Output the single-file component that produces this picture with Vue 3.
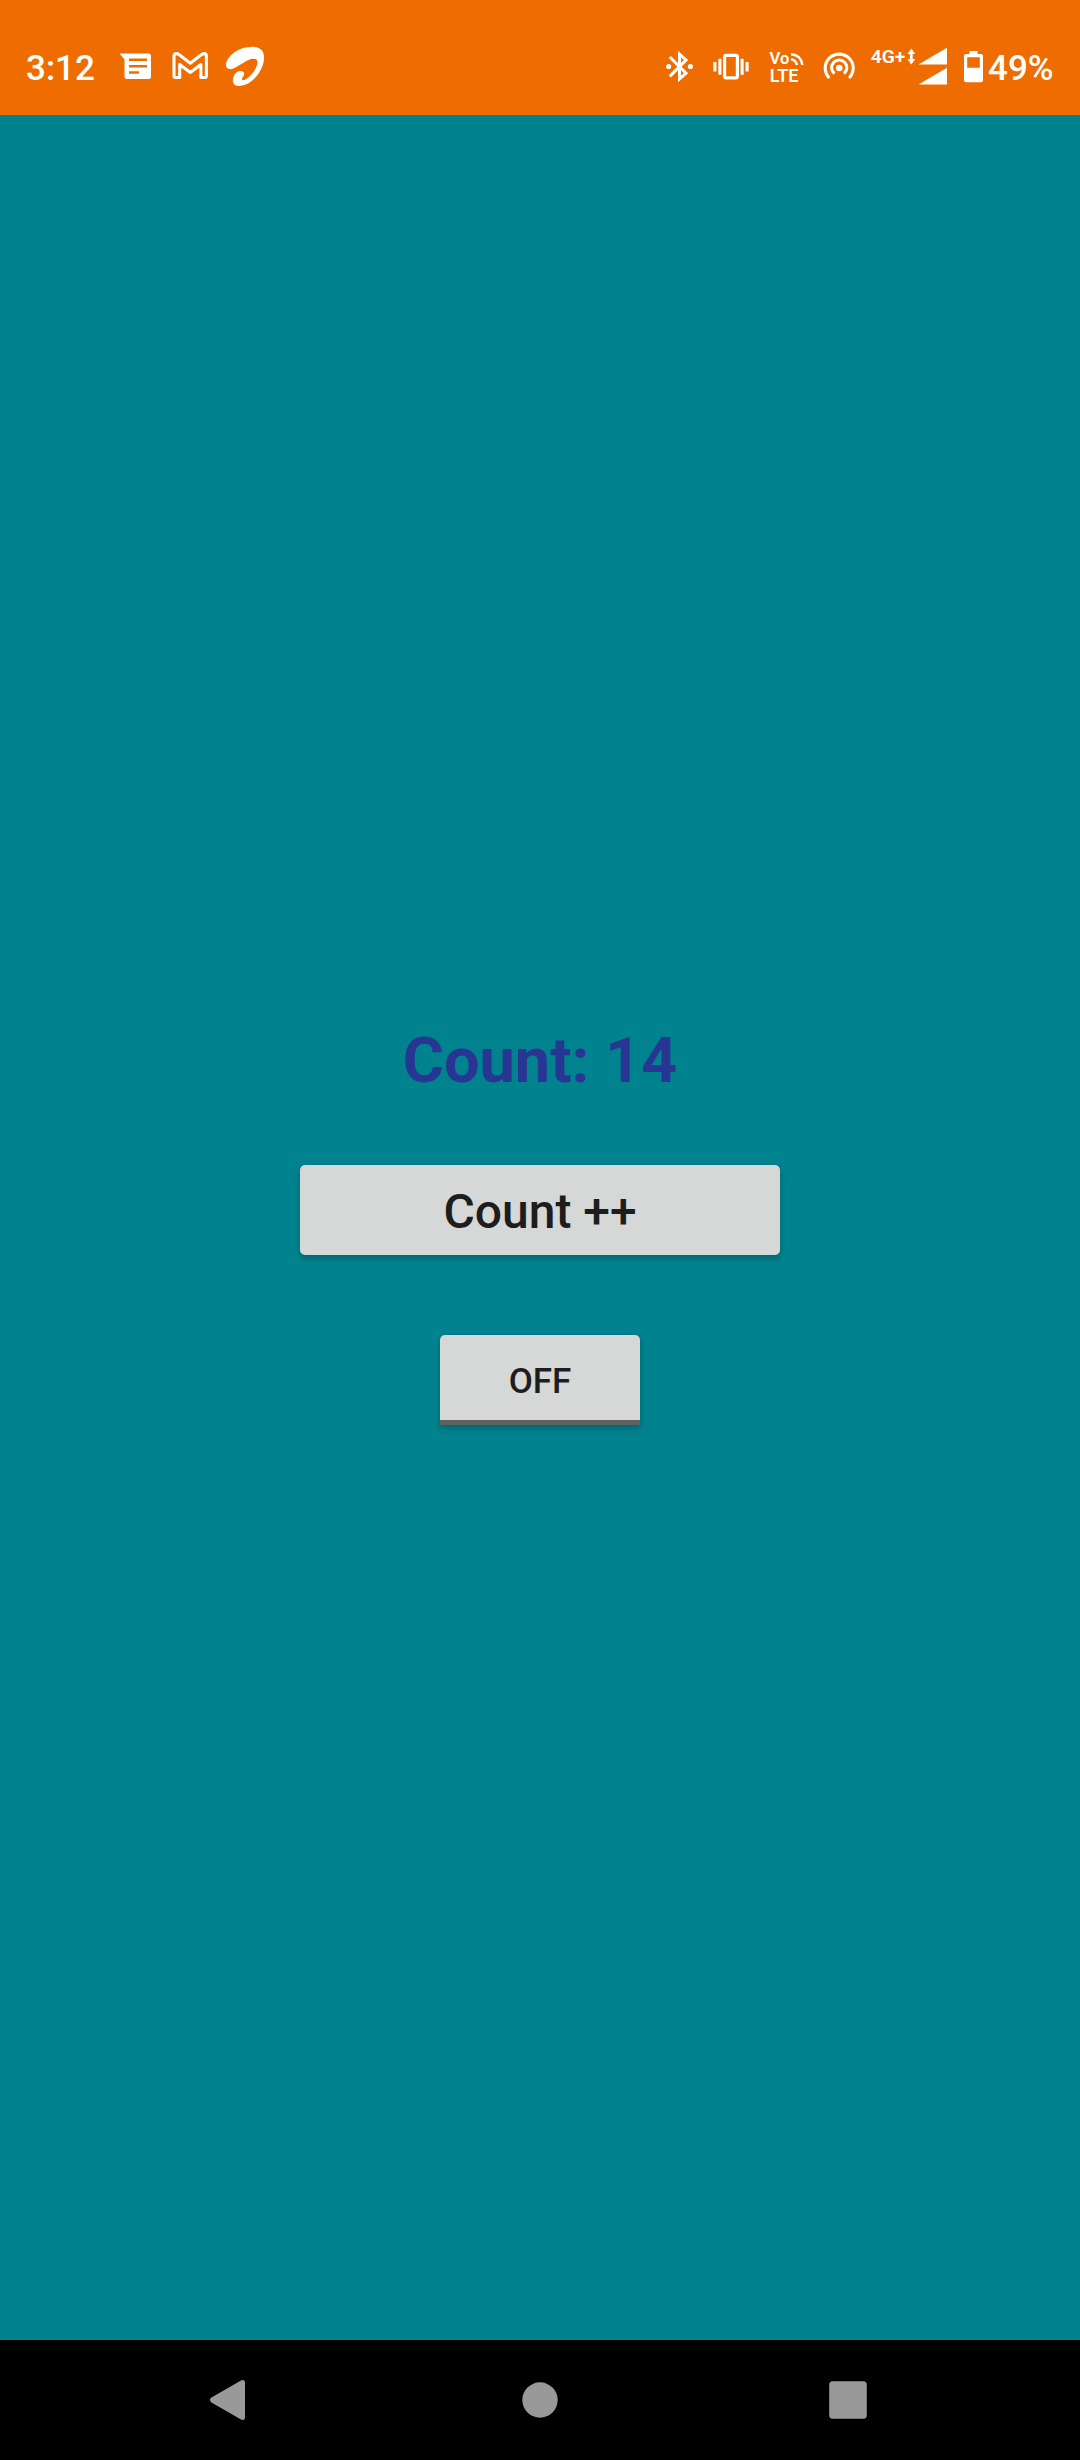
<script setup>
import { ref } from 'vue'

const count = ref(14)
const on = ref(false)
</script>

<template>
  <div class="screen">
    <header class="status">
      <div class="group">
        <span class="time">3:12</span>
        <svg class="messages" width="33" height="44" viewBox="119 45 33 44">
          <path fill="#fff" fill-rule="evenodd" d="M119.500 53.500H148.500Q151 53.500 151 56V76.500Q151 79 148.500 79H127Q124.500 79 124.500 76.500V59.500ZM129 58.500V61H147V58.500ZM129 65V67.500H147V65ZM129 71.300V73.800H139V71.300Z" />
        </svg>
        <svg class="gmail" width="36" height="44" viewBox="172 45 36 44">
          <path fill="none" stroke="#fff" stroke-width="3.100" stroke-linejoin="round" d="M174 56.500Q174 53.600 176.500 53.600Q177.800 53.600 179 54.600L190.300 63.200L201.600 54.600Q202.800 53.600 204.100 53.600Q206.400 53.600 206.400 56.500V76Q206.400 77.500 205 77.500H200.900V64.500L190.300 72.400L179.700 64.500V77.500H175.600Q174 77.500 174 76Z" />
        </svg>
        <svg class="airtel" width="40" height="44" viewBox="225 45 40 44">
          <path fill="#fff" d="M226 64.500C226.500 58 236 47 251 46.900C259 46.500 264 49.500 264 57C264.500 69 253 85.800 238.500 85.900C234 85.900 232.400 83 233 79C233.600 74 237 71 240.500 70.900C243.600 70.900 244.900 73 243.800 75.400C242.500 77.300 241 79.300 242.500 80C245.500 81.200 254 73 256.500 66.500C258.600 61.500 257.500 58.500 253 58.700C247.500 59 240.500 65 234 68.200C229 70.500 225.700 68.300 226 64.500Z" />
        </svg>
      </div>

      <div class="group">
        <svg width="30" height="44" viewBox="665 45 30 44">
          <path fill="none" stroke="#fff" stroke-width="3" d="M669.800 57L686 73.200L679.500 79V54.200L686 60L669.800 76.400" />
          <circle cx="668.700" cy="66.500" r="2.600" fill="#fff" />
          <circle cx="690.400" cy="66.500" r="2.600" fill="#fff" />
        </svg>
        <svg class="vibrate" width="36" height="44" viewBox="713 45 36 44">
          <rect x="724.600" y="55.400" width="12.800" height="22.400" rx="1.500" fill="none" stroke="#fff" stroke-width="3.200" />
          <path fill="none" stroke="#fff" stroke-width="3.100" d="M719.900 58.800V74.800M742.100 58.800V74.800M714.900 62V71.500M747.100 62V71.500" />
        </svg>
        <svg class="volte" width="35" height="44" viewBox="769 45 35 44">
          <g class="tiny">
            <text x="769.600" y="64" font-size="16.500" textLength="19.800" lengthAdjust="spacingAndGlyphs">Vo</text>
            <text x="769.700" y="81.900" font-size="17.800" textLength="28.800" lengthAdjust="spacingAndGlyphs">LTE</text>
          </g>
          <path fill="none" stroke="#fff" stroke-width="2.400" d="M791 59.200Q796 60 797 65M791 54.200Q801.500 55 802.300 65" />
        </svg>
        <svg class="hotspot" width="34" height="44" viewBox="822 45 34 44">
          <circle cx="839.200" cy="68" r="3.300" fill="#fff" />
          <path fill="none" stroke="#fff" stroke-width="3.100" d="M834.500 73.600A7.600 7.600 0 1 1 843.900 73.600M829.300 78A14 14 0 1 1 849.100 78" />
        </svg>
        <svg class="signal" width="78" height="44" viewBox="870 45 78 44">
          <text class="net" x="870.800" y="63" textLength="34.500" lengthAdjust="spacingAndGlyphs">4G+</text>
          <path fill="#fff" d="M911.300 48.500L915.300 54H912.700V59H915.300L911.300 64.500L907.300 59H909.900V54H907.300Z" />
          <path fill="#fff" d="M947 47.800V64.400H918.500ZM947 67.800V84.400H918.500Z" />
        </svg>
        <svg class="battery" width="20" height="44" viewBox="964 45 20 44">
          <path fill="#fff" fill-rule="evenodd" d="M969.500 51H977.500V54H981Q983 54 983 56V80.300Q983 82.300 981 82.300H966Q964 82.300 964 80.300V56Q964 54 966 54H969.500ZM967.200 57.200V67.700H979.800V57.200Z" />
        </svg>
        <span class="percent">49%</span>
      </div>
    </header>

    <main class="body">
      <h1 class="count">Count: {{ count }}</h1>
      <button class="btn add" @click="count++">Count ++</button>
      <button class="btn toggle" @click="on = !on">{{ on ? 'ON' : 'OFF' }}</button>
    </main>

    <nav class="nav">
      <svg width="36" height="42" viewBox="0 0 36 42">
        <path fill="#999" d="M1 18.800L31 1.400Q35 -0.100 35 4V38Q35 42.100 31 40.600L1 23.200Q-1 21 1 18.800Z" />
      </svg>
      <svg class="home" width="36" height="36" viewBox="0 0 36 36"><circle cx="18" cy="18" r="17.700" fill="#999" /></svg>
      <svg class="recent" width="38" height="38" viewBox="0 0 38 38"><rect x="0.200" y="0.200" width="37.600" height="37.600" rx="3.500" fill="#999" /></svg>
    </nav>
  </div>
</template>

<style>
body {
  margin: 0;
}
</style>

<style scoped>
.screen {
  display: flex;
  flex-direction: column;
  width: 1080px;
  height: 2460px;
  background: #00838f;
  font-family: Roboto, "Liberation Sans", sans-serif;
}

.status {
  display: flex;
  justify-content: space-between;
  box-sizing: border-box;
  height: 115px;
  padding: 45px 26px 0 26px;
  background: #ef6c00;
  color: #fff;
}

.group {
  display: flex;
  align-items: flex-start;
}

.group svg {
  flex: none;
}

.time,
.percent {
  font-size: 35px;
  font-weight: 500;
  line-height: 47px;
  white-space: nowrap;
}

.time {
  width: 93px;
}

.percent {
  width: 66px;
  margin-left: 4px;
}

.gmail {
  margin-left: 20px;
}

.airtel {
  margin-left: 17px;
}

.vibrate {
  margin-left: 18px;
}

.volte {
  margin-left: 20px;
}

.hotspot {
  margin-left: 18px;
}

.signal {
  margin-left: 14px;
}

.battery {
  margin-left: 16px;
}

.tiny text {
  fill: #fff;
  font-weight: 600;
}

.net {
  fill: #fff;
  font-size: 19px;
  font-weight: 600;
}

.body {
  flex: 1;
  display: flex;
  flex-direction: column;
  align-items: center;
  padding-top: 909px;
}

.count {
  margin: 0;
  color: #283593;
  font-size: 63px;
  font-weight: 700;
  line-height: 74px;
  white-space: nowrap;
}

.btn {
  box-sizing: border-box;
  height: 90px;
  padding: 0;
  border: 0;
  border-radius: 5px;
  background: #d6d7d7;
  color: #1d1d1d;
  font-family: inherit;
  font-weight: 500;
  box-shadow: 0 4px 6px rgba(0, 0, 0, 0.2), 0 0 4px rgba(0, 0, 0, 0.06);
}

.add {
  width: 480px;
  margin-top: 67px;
  padding-top: 3px;
  font-size: 48px;
}

.toggle {
  width: 200px;
  margin-top: 80px;
  padding-top: 8px;
  border-bottom: 5px solid #616161;
  border-radius: 5px 5px 0 0;
  font-size: 35px;
}

.nav {
  display: flex;
  align-items: center;
  height: 120px;
  padding-left: 210px;
  background: #000;
}

.home {
  margin-left: 276px;
}

.recent {
  margin-left: 271px;
}
</style>
